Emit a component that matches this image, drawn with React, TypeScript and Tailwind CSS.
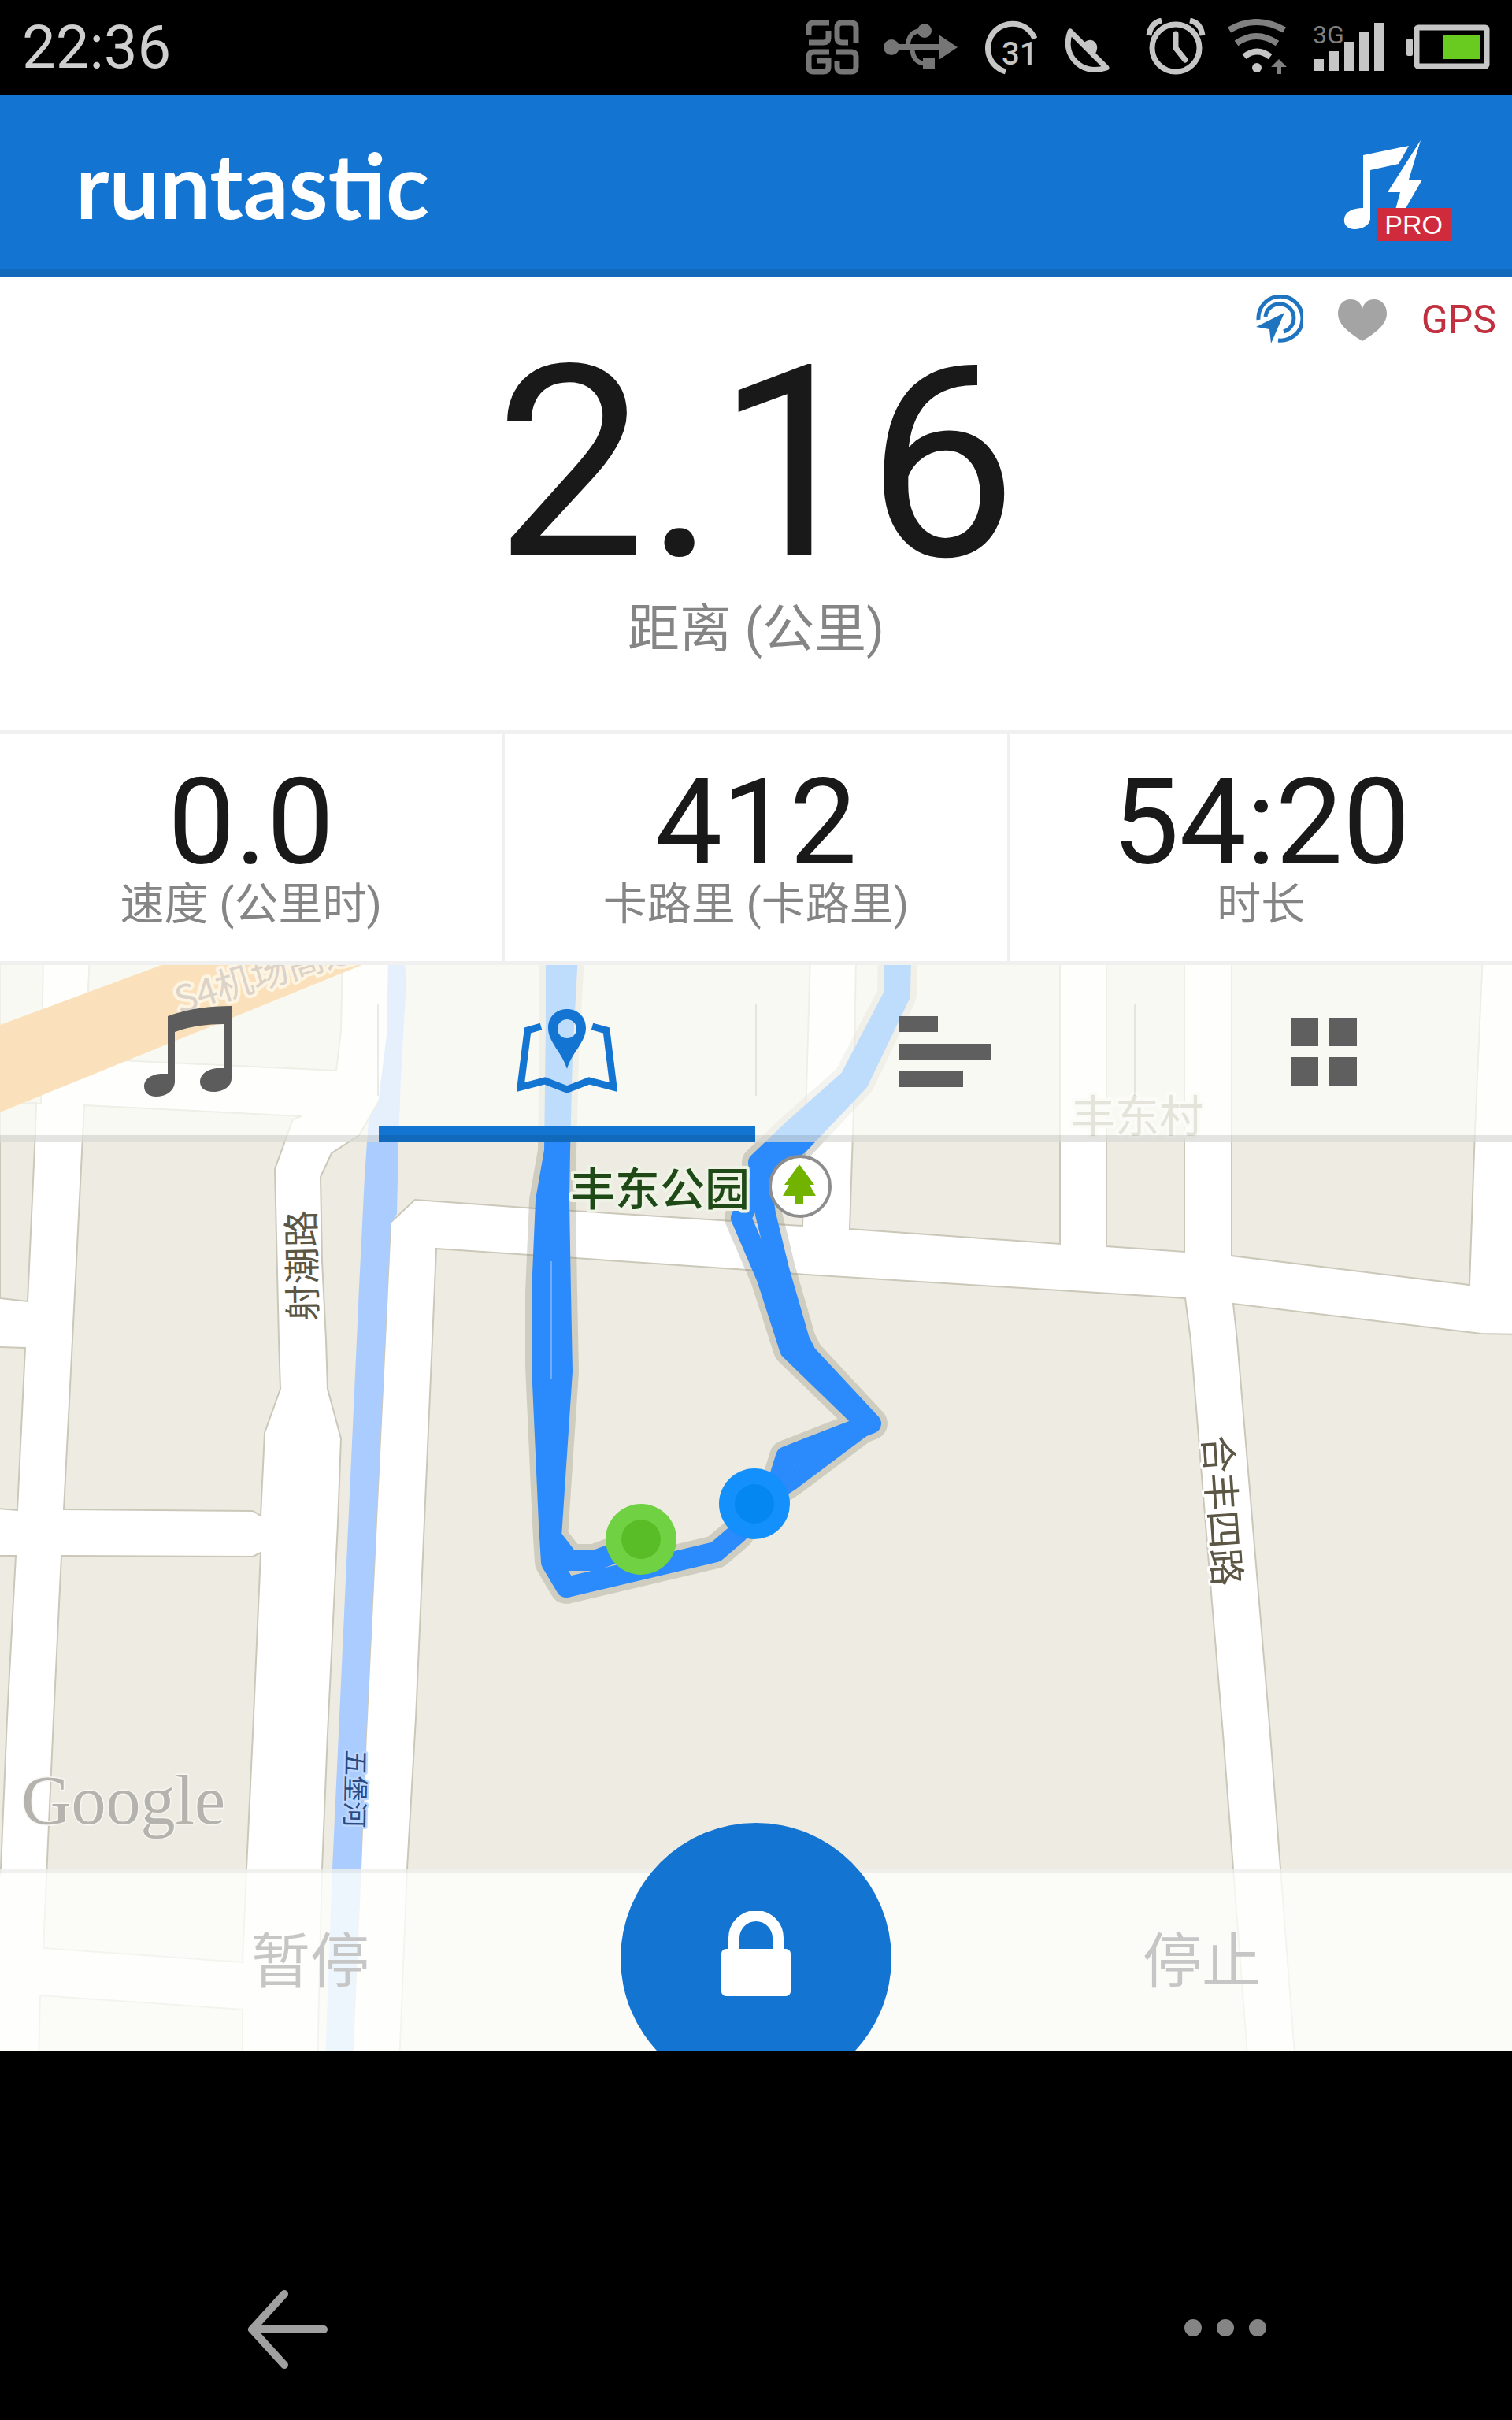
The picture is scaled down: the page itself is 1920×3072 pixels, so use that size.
import { ReactNode } from 'react';

interface Stat {
  value: string;
  label: string;
}

const stats: Stat[] = [
  { value: '0.0', label: '速度 (公里时)' },
  { value: '412', label: '卡路里 (卡路里)' },
  { value: '54:20', label: '时长' },
];

// City blocks; everything that is left white between them is a road
const blocks = [
  '0,1210 55,1210 52,1400 0,1400',
  '114,1210 435,1210 433,1307 427,1358 153,1345 108,1345',
  '0,1399 46,1399 45,1433 35,1651 0,1647',
  '107,1402 383,1416 372,1420 349,1483 354,1700 356,1762 336,1818 331,1923 321,1917 81,1915 92,1700',
  '-4,1709 32,1710 22,1916 -4,1914',
  '-4,1974 20,1974 9,2180 1,2371 -4,2400',
  '78,1974 321,1975 331,1970 321,2200 313,2371 308,2490 55,2472 68,2180',
  '51,2532 308,2550 308,2620 49,2620',
  '481,1397 456,1440 421,1463 407,1493 409,1600 414,1700 416,1762 433,1825 429,1933 416,2200 409,2371 403,2620 447,2620 458,2371 465,2200 489,1700 496,1552 506,1450',
  '508,1210 1029,1210 1019,1555 984,1553 931,1549 680,1533 527,1522 497,1550',
  '1087,1210 1346,1210 1346,1578 1079,1559 1084,1407',
  '1405,1210 1504,1210 1504,1588 1405,1581',
  '1564,1210 1883,1210 1873,1433 1866,1630 1564,1593',
  '554,1584 949,1611 1009,1616 1505,1647 1512,1700 1539,2033 1553,2200 1566,2371 1585,2620 507,2620 517,2371 528,2180 549,1700',
  '1566,1654 1881,1692 1930,1693 1930,2620 1645,2620 1626,2371 1613,2200 1599,2033 1571,1700',
];

const river =
  '493,1210 491,1313 480,1400 468,1420 463,1493 456,1633 453,1700 430,2200 422,2371 413,2620 447,2620 458,2371 465,2200 489,1700 496,1552 504,1540 506,1450 509,1367 516,1243 513,1210';

const track = [
  '706,1210 706,1300 704,1460 693,1523 688,1640 688,1733 697,1933 700,1982 719,2014 909,1969 937,1945 958,1908',
  '721,1210 714,1340 711,1460 710,1523 712,1640 714,1740 700,1950 723,1980 755,1980 814,1958',
  '1136,1210 1135,1262 1079,1369 1008,1432 963,1475 972,1540 989,1610 1015,1700 1024,1718 1106,1806 998,1848 988,1880 958,1908',
  '1144,1210 1143,1262 1090,1372 1014,1452 968,1490 941,1545 974,1622 1003,1712 1100,1806 1004,1878 958,1908',
];

function MapCanvas() {
  return (
    <svg viewBox="0 1224 1920 1378" className="block w-full h-auto bg-white" role="img" aria-label="丰东公园">
      <g fill="#eeebe2" stroke="#cbc8b9" strokeWidth="2">
        {blocks.map(points => (
          <polygon key={points} points={points} />
        ))}
      </g>
      <polygon points={river} fill="#aaccff" />
      <polygon points="0,1300 208,1223 228,1210 494,1210 462,1223 0,1411" fill="#f59b26" />

      <g className="font-['Noto_Sans_CJK_SC',sans-serif]" strokeLinejoin="round" paintOrder="stroke">
        <text transform="translate(228 1286) rotate(-17)" fontSize="47" fill="#8a6a50" stroke="#fbd9a8" strokeWidth="8">
          S4机场高速
        </text>
        <text x="1360" y="1436" fontSize="56" fill="#a8a58c" stroke="#f4f3ee" strokeWidth="8">丰东村</text>
        <text transform="translate(402 1676) rotate(-91)" fontSize="47" fill="#5c5644" stroke="#fff" strokeWidth="6">
          射潮路
        </text>
        <text transform="translate(1528 1822) rotate(86)" fontSize="48" fill="#5c5644" stroke="#fff" strokeWidth="6">
          合丰四路
        </text>
        <text transform="translate(440 2220) rotate(91)" fontSize="33" fill="#2d4a80" stroke="#bcd7ff" strokeWidth="5">
          五堡河
        </text>
      </g>

      <g fill="none" strokeLinejoin="round">
        <g stroke="#8a8775" strokeWidth="42" opacity="0.3">
          {track.map(points => (
            <polyline key={points} points={points} />
          ))}
        </g>
        <g stroke="#2b8afc" strokeWidth="26">
          {track.map(points => (
            <polyline key={points} points={points} />
          ))}
        </g>
        <path d="M700 1600L700 1750" stroke="#6faefa" strokeWidth="2" />
      </g>

      <text
        x="724"
        y="1529"
        fontSize="57"
        fontWeight="500"
        fill="#1f4a17"
        stroke="#eef3e6"
        strokeWidth="8"
        strokeLinejoin="round"
        paintOrder="stroke"
        className="font-['Noto_Sans_CJK_SC',sans-serif]"
      >
        丰东公园
      </text>

      <circle cx="1016" cy="1505" r="38" fill="#fff" stroke="#8d8d8d" strokeWidth="4" />
      <path d="M1015 1477l19 26h-6l8 14h-16v10h-10v-10h-16l8-14h-6z" fill="#72b300" />

      <circle cx="958" cy="1908" r="45" fill="#1390fc" />
      <circle cx="958" cy="1908" r="25" fill="#0587f2" />
      <circle cx="814" cy="1953" r="45" fill="#70d142" />
      <circle cx="814" cy="1953" r="25" fill="#58bd27" />

      <text
        x="27"
        y="2314"
        fontSize="88"
        fill="#b4b3ae"
        stroke="#f7f6f2"
        strokeWidth="3"
        paintOrder="stroke"
        className="font-['Liberation_Serif',serif]"
      >
        Google
      </text>
    </svg>
  );
}

function StatusBar() {
  return (
    <div className="flex items-center justify-between bg-black pl-7 pr-7 py-4">
      <span className="text-[76px] leading-[88px] text-[#cfcfcf]">22:36</span>
      <div className="flex items-center text-[#c6c6c6]">
        <svg width="68" height="70" viewBox="0 0 68 70" fill="none" stroke="#767676" strokeWidth="7" className="mr-[31px]">
          <path d="M30 4H10Q4 4 4 10V20M4 29H22Q29 29 29 23V14" />
          <path d="M64 29V10Q64 4 58 4H46Q40 4 40 10V22Q40 29 46 29H54" />
          <path d="M30 41H10Q4 41 4 47V60Q4 66 10 66H22Q29 66 29 60V52H14" />
          <path d="M38 41H58Q64 41 64 47V60Q64 66 58 66H46Q40 66 40 60V52" />
        </svg>
        <svg width="94" height="60" viewBox="0 0 94 60" fill="#767676" className="mr-[35px]">
          <circle cx="10" cy="30" r="10" />
          <path d="M10 26h60v8H10zM70 14l24 16-24 16z" />
          <path d="M30 30C32 15 36 9 50 9M36 30c1 14 6 21 20 21" fill="none" stroke="#767676" strokeWidth="6" />
          <circle cx="52" cy="9" r="9" />
          <path d="M50 43h15v14H50z" />
        </svg>
        <svg width="68" height="72" viewBox="0 0 68 72" fill="none" stroke="currentColor" className="mr-[34px]">
          <path d="M26 67A31 31 0 1 1 63 25" strokeWidth="7" />
          <text x="21" y="58" fontSize="40" fontWeight="500" fill="currentColor" stroke="none">31</text>
        </svg>
        <svg width="58" height="58" viewBox="0 0 58 58" fill="none" stroke="currentColor" className="mr-[44px] mt-2">
          <path d="M6 5C-1 25 6 40 20 49q14 8 32 2z" strokeWidth="7" strokeLinejoin="round" />
          <path d="M22 20q10-8 16-1 5 6-1 16z" fill="currentColor" stroke="none" />
        </svg>
        <svg width="76" height="74" viewBox="0 0 76 74" fill="none" stroke="currentColor" className="mr-[28px]">
          <circle cx="38" cy="38" r="30" strokeWidth="7" />
          <path d="M38 20v18l12 15" strokeWidth="7" strokeLinecap="round" />
          <path d="M4 22Q6 6 20 3M72 22Q70 6 56 3" strokeWidth="7" />
        </svg>
        <svg width="76" height="72" viewBox="0 0 76 72" fill="none" stroke="currentColor" strokeWidth="8" className="mr-[33px]">
          <path d="M2 14q34-20 70 0M11 31q25-18 52 0" stroke="#808080" />
          <path d="M21 48q16-13 33 0" />
          <ellipse cx="37" cy="62" rx="6" ry="6" fill="currentColor" stroke="none" />
          <path d="M65 51l10 10h-7v9h-6v-9h-7z" fill="#808080" stroke="none" />
        </svg>
        <svg width="90" height="62" viewBox="0 0 90 62" fill="currentColor" className="mr-[28px] overflow-visible">
          <path d="M0 46h13v15H0zM19 36h13v25H19zM39 24h12v37H39zM58 12h12v49H58zM77 0h13v61H77z" />
          <text x="-1" y="26" fontSize="32" fill="#808080">3G</text>
        </svg>
        <svg width="106" height="58" viewBox="0 0 106 58">
          <rect x="0" y="18" width="8" height="22" rx="2" fill="currentColor" />
          <rect x="13" y="4" width="89" height="49" rx="2" fill="none" stroke="currentColor" strokeWidth="7" />
          <rect x="46" y="13" width="48" height="31" fill="#69cb1f" />
        </svg>
      </div>
    </div>
  );
}

function AppHeader() {
  return (
    <header className="flex items-end justify-between bg-[#1375d1] border-b-[10px] border-[#1268ba] pl-24 pr-[78px] pt-[42px] pb-[35px]">
      <h1 className="font-['Lato',sans-serif] text-[114px] leading-[144px] font-bold text-white">runtastic</h1>
      <button aria-label="PRO" className="relative">
        <svg width="136" height="128" viewBox="0 0 136 128" fill="#fff">
          <path d="M25 19L83 7 70 30 34 38V100C33 108 24 113 14 113 5 113 0 107 1 100 2 91 11 86 25 86z" />
          <path d="M98 0L83 50h17L78 88H66l6-22H56z" />
        </svg>
        <span className="absolute right-0 bottom-0 bg-[#cf2b3d] px-2.5 font-['Liberation_Sans',sans-serif] text-[34px] leading-[42px] text-white">
          PRO
        </span>
      </button>
    </header>
  );
}

function Distance() {
  return (
    <section className="flex flex-col items-center bg-white pb-22">
      <div className="self-stretch flex items-center justify-end gap-11 pt-6 pr-5 pb-0.5">
        <svg width="60" height="62" viewBox="0 0 60 62" fill="none" stroke="#1f74c0" strokeWidth="5">
          <path d="M3 31A28 28 0 1 1 28 57" />
          <path d="M12 27A18 18 0 1 1 35 46" />
          <path d="M0 40L36 22 19 61 17 43z" fill="#1f74c0" stroke="none" />
        </svg>
        <svg width="62" height="53" viewBox="0 0 62 53" fill="#a4a4a4">
          <path d="M31 53C10 40 0 30 0 18 0 7 7 0 16 0c8 0 13 4 15 12C33 4 38 0 46 0c9 0 16 7 16 18 0 12-10 22-31 35z" />
        </svg>
        <span className="text-[50px] leading-[62px] text-[#c0303f]">GPS</span>
      </div>
      <p className="text-[340px] leading-[300px] text-[#191919]">2.16</p>
      <p className="mt-5 text-[66px] leading-[80px] text-[#858585]">距离 (公里)</p>
    </section>
  );
}

function StatCell({ value, label }: Stat) {
  return (
    <div className="flex-1 flex flex-col items-center pt-13 pb-10">
      <p className="text-[152px] leading-[120px] text-[#191919]">{value}</p>
      <p className="mt-3 text-[56px] leading-[64px] text-[#858585]">{label}</p>
    </div>
  );
}

interface TabProps {
  label: string;
  active?: boolean;
  children: ReactNode;
}

function Tab({ label, active, children }: TabProps) {
  return (
    <button aria-label={label} aria-pressed={active} className="relative flex-1 flex items-center justify-center pt-1">
      {children}
      {active && (
        <span className="absolute inset-x-0 -bottom-[9px] h-5 bg-[#1375d1] border-b-[9px] border-black/10" />
      )}
    </button>
  );
}

function Divider() {
  return <span className="w-0.5 h-29 self-center bg-black/8" />;
}

function MapTabs() {
  return (
    <nav className="absolute inset-x-0 top-0 h-[225px] flex bg-[#fdfffb]/70 border-b-[9px] border-black/10">
      <Tab label="音乐">
        <svg width="112" height="116" viewBox="0 0 112 116" fill="#5c5c5c">
          <path d="M30 13Q66 0 111 0V92C111 102 101 109 88 109 77 109 71 104 71 96 71 86 82 79 95 79H101V23Q66 23 39 33V97C38 108 28 115 15 115 6 115 0 110 0 102 0 92 11 86 23 86H30z" />
        </svg>
      </Tab>
      <Divider />
      <Tab label="地图" active>
        <svg width="128" height="108" viewBox="0 0 128 108" fill="none" stroke="#1375d1" strokeWidth="9">
          <path d="M31 22L14 27 5 99 36 91 64 102 92 91 123 99 114 27 96 22" />
          <path
            d="M64 0C50 0 40 10 40 24 40 42 58 55 64 76 70 55 88 42 88 24 88 10 78 0 64 0zm0 13a12 12 0 1 1 0 24 12 12 0 0 1 0-24z"
            fill="#1375d1"
            fillRule="evenodd"
            stroke="none"
          />
        </svg>
      </Tab>
      <Divider />
      <Tab label="分段">
        <svg width="116" height="90" viewBox="0 0 116 90" fill="#5f5f5f">
          <path d="M0 0h49v20H0zM0 35h116v20H0zM0 70h81v20H0z" />
        </svg>
      </Tab>
      <Divider />
      <Tab label="更多">
        <svg width="84" height="86" viewBox="0 0 84 86" fill="#5f5f5f">
          <path d="M0 0h35v36H0zM49 0h35v36H49zM0 50h35v36H0zM49 50h35v36H49z" />
        </svg>
      </Tab>
    </nav>
  );
}

function SessionControls() {
  return (
    <div className="absolute inset-x-0 bottom-0 h-[231px] flex items-start bg-[#fefffd]/80 border-t-[5px] border-black/5 text-[75px] leading-[88px] text-[#c6c6c6]">
      <button className="flex-1 h-full">暂停</button>
      <button
        aria-label="锁定"
        className="-mt-[63px] size-[344px] rounded-full bg-[#1375d1] flex items-center justify-center pb-3"
      >
        <svg width="88" height="108" viewBox="0 0 88 108" fill="#fff">
          <path d="M16 56V34a28 28 0 0 1 56 0v22" fill="none" stroke="#fff" strokeWidth="14" />
          <rect y="48" width="88" height="60" rx="6" />
        </svg>
      </button>
      <button className="flex-1 h-full">停止</button>
    </div>
  );
}

function NavigationBar() {
  return (
    <div className="flex-1 flex items-end justify-between bg-black pl-[313px] pr-[312px] pb-16">
      <button aria-label="返回">
        <svg width="104" height="102" viewBox="0 0 104 102" fill="none" stroke="#a0a0a0" strokeWidth="10" strokeLinecap="round" strokeLinejoin="round">
          <path d="M48 6L7 51l41 45M7 51h91" />
        </svg>
      </button>
      <button aria-label="菜单" className="flex gap-[19px] pb-[42px]">
        <span className="size-[22px] rounded-full bg-[#858585]" />
        <span className="size-[22px] rounded-full bg-[#858585]" />
        <span className="size-[22px] rounded-full bg-[#858585]" />
      </button>
    </div>
  );
}

export default function App() {
  return (
    <div className="min-h-screen flex flex-col bg-black font-['Roboto','Noto_Sans_CJK_SC',sans-serif]">
      <StatusBar />
      <AppHeader />
      <Distance />
      <section className="flex bg-white border-y-[5px] border-[#f0f0f0] divide-x-4 divide-[#f0f0f0]">
        {stats.map(stat => (
          <StatCell key={stat.label} value={stat.value} label={stat.label} />
        ))}
      </section>
      <section className="relative overflow-hidden">
        <MapCanvas />
        <MapTabs />
        <SessionControls />
      </section>
      <NavigationBar />
    </div>
  );
}
